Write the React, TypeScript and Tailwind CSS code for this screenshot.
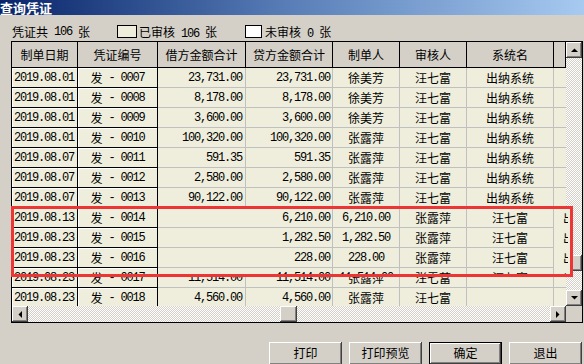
import React from 'react';

const CJK = "font-['Noto_Sans_CJK_SC',sans-serif] text-[12px]";
const MONO = "font-['Liberation_Mono','Noto_Sans_CJK_SC',monospace] text-[12px] tracking-[-1.2px] whitespace-pre";

const RAISED = 'bg-[#d4d0c8] shadow-[inset_-1px_-1px_0_#404040,inset_1px_1px_0_#ffffff,inset_-2px_-2px_0_#808080]';
const CHECKER = 'bg-[image:repeating-conic-gradient(#d4d0c8_0_25%,#ffffff_0_50%)] bg-[size:2px_2px]';

// mix CJK runs and half-width runs like the old SimSun bitmap font
function Txt({ s }: { s: string }) {
  const parts = s.split(/([\u4e00-\u9fff]+)/).filter(Boolean);
  return (
    <>
      {parts.map((p, i) =>
        /[\u4e00-\u9fff]/.test(p) ? (
          <span key={i} className={CJK}>{p}</span>
        ) : (
          <span key={i} className={MONO}>{p}</span>
        )
      )}
    </>
  );
}

type Row = { date: string; no: string; debit: string; credit: string; maker: string; auditor: string; sys: string };

const ROWS: Row[] = [
  { date: '2019.08.01', no: '0007', debit: '23,731.00', credit: '23,731.00', maker: '徐美芳', auditor: '汪七富', sys: '出纳系统' },
  { date: '2019.08.01', no: '0008', debit: '8,178.00', credit: '8,178.00', maker: '徐美芳', auditor: '汪七富', sys: '出纳系统' },
  { date: '2019.08.01', no: '0009', debit: '3,600.00', credit: '3,600.00', maker: '徐美芳', auditor: '汪七富', sys: '出纳系统' },
  { date: '2019.08.01', no: '0010', debit: '100,320.00', credit: '100,320.00', maker: '张露萍', auditor: '汪七富', sys: '出纳系统' },
  { date: '2019.08.07', no: '0011', debit: '591.35', credit: '591.35', maker: '张露萍', auditor: '汪七富', sys: '出纳系统' },
  { date: '2019.08.07', no: '0012', debit: '2,580.00', credit: '2,580.00', maker: '张露萍', auditor: '汪七富', sys: '出纳系统' },
  { date: '2019.08.07', no: '0013', debit: '90,122.00', credit: '90,122.00', maker: '张露萍', auditor: '汪七富', sys: '出纳系统' },
  { date: '2019.08.13', no: '0014', debit: '6,210.00', credit: '6,210.00', maker: '张露萍', auditor: '汪七富', sys: '出纳系统' },
  { date: '2019.08.23', no: '0015', debit: '1,282.50', credit: '1,282.50', maker: '张露萍', auditor: '汪七富', sys: '出纳系统' },
  { date: '2019.08.23', no: '0016', debit: '228.00', credit: '228.00', maker: '张露萍', auditor: '汪七富', sys: '出纳系统' },
  { date: '2019.08.23', no: '0017', debit: '11,514.00', credit: '11,514.00', maker: '张露萍', auditor: '汪七富', sys: '' },
  { date: '2019.08.23', no: '0018', debit: '4,560.00', credit: '4,560.00', maker: '张露萍', auditor: '汪七富', sys: '' },
];

// the pasted rows inside the red frame come from a layout with one more column
const PASTED = [
  { date: '2019.08.13', no: '0014', amt: '6,210.00' },
  { date: '2019.08.23', no: '0015', amt: '1,282.50' },
  { date: '2019.08.23', no: '0016', amt: '228.00' },
  { date: '2019.08.23', no: '0017', amt: '11,514.00' },
];

const FIX = 'h-full shrink-0 flex items-center bg-[#efeedc] border-r border-b border-black shadow-[inset_1px_1px_0_#ffffff]';
const CELL = 'h-full shrink-0 flex items-center bg-[#efeedc] border-r border-b border-[#c0c0c0]';
const HEAD = 'h-full shrink-0 flex items-center justify-center bg-[#d4d0c8] border-r border-b border-black';

function Arrow({ dir }: { dir: 'up' | 'down' | 'left' | 'right' }) {
  const pts = {
    up: '0,4 7,4 3.5,0.5',
    down: '0,0 7,0 3.5,3.5',
    left: '4,0 4,7 0.5,3.5',
    right: '0,0 0,7 3.5,3.5',
  }[dir];
  const vertical = dir === 'up' || dir === 'down';
  return (
    <svg width={vertical ? 7 : 4} height={vertical ? 4 : 7} viewBox={vertical ? '0 0 7 4' : '0 0 4 7'}>
      <polygon points={pts} fill="#000" />
    </svg>
  );
}

function Btn({ label, def }: { label: string; def?: boolean }) {
  return (
    <div className={`w-[73px] h-[23px] shrink-0 ${def ? 'border border-black' : ''}`}>
      <div className={`w-full h-full flex items-center justify-center pb-[2px] text-black ${RAISED}`}>
        <span className={CJK}>{label}</span>
      </div>
    </div>
  );
}

export default function App() {
  return (
    <div className="w-[584px] h-[364px] bg-[#d4d0c8] overflow-hidden relative text-black leading-none">
      {/* title bar */}
      <div className="h-[15px] bg-linear-to-r from-[#0a246a] via-[#5a7fb8] to-[#a6caf0] flex items-center">
        <span className="font-['Noto_Sans_CJK_SC',sans-serif] text-[13px] font-bold text-white leading-[15px]">查询凭证</span>
      </div>

      {/* legend */}
      <div className="mt-[10px] h-[13px] flex items-center pl-[12px]">
        <Txt s="凭证共 106 张" />
        <div className="ml-[27px] w-[20px] h-[13px] bg-[#efeedc] border border-black" />
        <div className="ml-[2px]"><Txt s="已审核 106 张" /></div>
        <div className="ml-[28px] w-[17px] h-[13px] bg-white border border-black" />
        <div className="ml-[3px]"><Txt s="未审核 0 张" /></div>
      </div>

      {/* grid */}
      <div className="mt-[3px] ml-[11px] w-[572px] h-[282px] border border-black flex flex-col">
        <div className="flex h-[264px]">
          <div className="w-[554px] flex flex-col overflow-hidden">
            <div className="flex h-[26px] shrink-0">
              <div className={`${HEAD} w-[66px]`}><span className={CJK}>制单日期</span></div>
              <div className={`${HEAD} w-[80px]`}><span className={CJK}>凭证编号</span></div>
              <div className={`${HEAD} w-[88px]`}><span className={CJK}>借方金额合计</span></div>
              <div className={`${HEAD} w-[87px]`}><span className={CJK}>贷方金额合计</span></div>
              <div className={`${HEAD} w-[67px]`}><span className={CJK}>制单人</span></div>
              <div className={`${HEAD} w-[67px]`}><span className={CJK}>审核人</span></div>
              <div className={`${HEAD} w-[87px]`}><span className={CJK}>系统名</span></div>
              <div className={`${HEAD} w-[12px]`} />
            </div>
            {ROWS.map((r) => (
              <div key={r.no} className="flex h-[20px] shrink-0">
                <div className={`${FIX} w-[66px] pl-[2px]`}><Txt s={r.date} /></div>
                <div className={`${FIX} w-[80px] justify-center`}><Txt s={`发 - ${r.no}`} /></div>
                <div className={`${CELL} w-[88px] justify-end pr-[3px]`}><Txt s={r.debit} /></div>
                <div className={`${CELL} w-[87px] justify-end pr-[2px]`}><Txt s={r.credit} /></div>
                <div className={`${CELL} w-[67px] justify-center`}><Txt s={r.maker} /></div>
                <div className={`${CELL} w-[67px] justify-center`}><Txt s={r.auditor} /></div>
                <div className={`${CELL} w-[87px] justify-center`}><Txt s={r.sys} /></div>
                <div className="h-full shrink-0 w-[12px] bg-[#efeedc] border-b border-[#c0c0c0]" />
              </div>
            ))}
          </div>
          {/* vertical scrollbar */}
          <div className="w-[16px] flex flex-col">
            <div className={`h-[16px] flex items-center justify-center ${RAISED}`}><Arrow dir="up" /></div>
            <div className={`flex-1 pt-[197px] ${CHECKER}`}>
              <div className={`h-[16px] ${RAISED}`} />
            </div>
            <div className={`h-[16px] flex items-center justify-center ${RAISED}`}><Arrow dir="down" /></div>
          </div>
        </div>
        {/* horizontal scrollbar */}
        <div className="flex h-[16px]">
          <div className="w-[554px] flex">
            <div className={`w-[16px] flex items-center justify-center ${RAISED}`}><Arrow dir="left" /></div>
            <div className={`flex-1 pl-[252px] ${CHECKER}`}>
              <div className={`w-[17px] h-full ${RAISED}`} />
            </div>
            <div className={`w-[16px] flex items-center justify-center ${RAISED}`}><Arrow dir="right" /></div>
          </div>
          <div className="w-[16px] bg-[#d4d0c8]" />
        </div>
      </div>

      {/* buttons */}
      <div className="mt-[19px] flex justify-end gap-[7px] pr-[2px]">
        <Btn label="打印" />
        <Btn label="打印预览" />
        <Btn label="确定" def />
        <Btn label="退出" />
      </div>

      {/* highlighted rows pasted over the grid */}
      <div className="absolute left-[11px] top-[206px] w-[562px] h-[71px] border-[3px] border-[#ee3535] overflow-hidden bg-[#efeedc]">
        <div className="-ml-[2px] -mt-[1px] flex flex-col">
          {PASTED.map((p) => (
            <div key={p.no} className="flex h-[20px] shrink-0">
              <div className={`${FIX} w-[66px] pl-[2px]`}><Txt s={p.date} /></div>
              <div className={`${FIX} w-[80px] justify-center`}><Txt s={`发 - ${p.no}`} /></div>
              <div className="h-full shrink-0 w-[88px] bg-[#efeedc] border-b border-[#c0c0c0]" />
              <div className={`${CELL} w-[87px] justify-end pr-[2px]`}><Txt s={p.amt} /></div>
              <div className={`${CELL} w-[67px] justify-center`}><Txt s={p.amt} /></div>
              <div className={`${CELL} w-[67px] justify-center`}><Txt s="张露萍" /></div>
              <div className={`${CELL} w-[87px] justify-center`}><Txt s="汪七富" /></div>
              <div className="h-full shrink-0 w-[14px] overflow-hidden flex items-center pl-[9px] bg-[#efeedc] whitespace-nowrap">
                <Txt s="出纳系统" />
              </div>
            </div>
          ))}
        </div>
      </div>
    </div>
  );
}
